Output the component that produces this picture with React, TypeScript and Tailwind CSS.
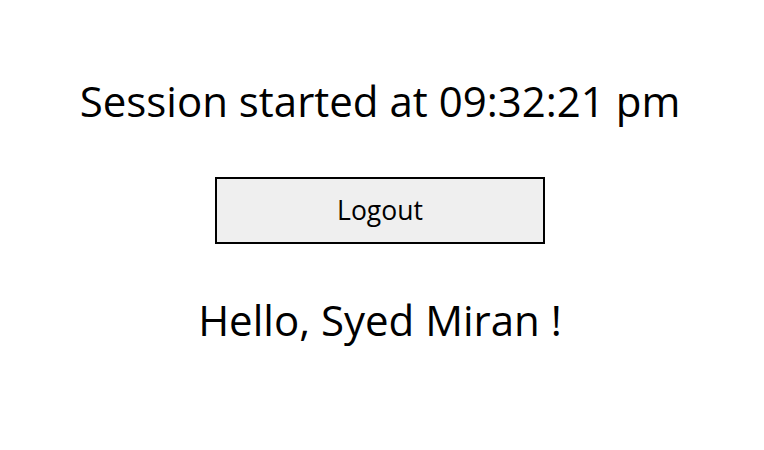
export default function App() {
  return (
    <div className="w-[764px] h-[450px] bg-white flex flex-col items-center pr-[4px] text-black" style={{ fontFamily: '"Open Sans", "Noto Sans", sans-serif' }}>
      <div className="mt-[73px] h-[56px] flex items-center text-[42px] leading-none whitespace-nowrap">Session started at 09:32:21 pm</div>
      <button className="mt-[48px] w-[330px] h-[67px] border-2 border-black bg-[#efefef] text-[26.5px] flex items-center justify-center">Logout</button>
      <div className="mt-[48px] h-[56px] flex items-center text-[42px] leading-none whitespace-nowrap">Hello, Syed Miran !</div>
    </div>
  );
}
